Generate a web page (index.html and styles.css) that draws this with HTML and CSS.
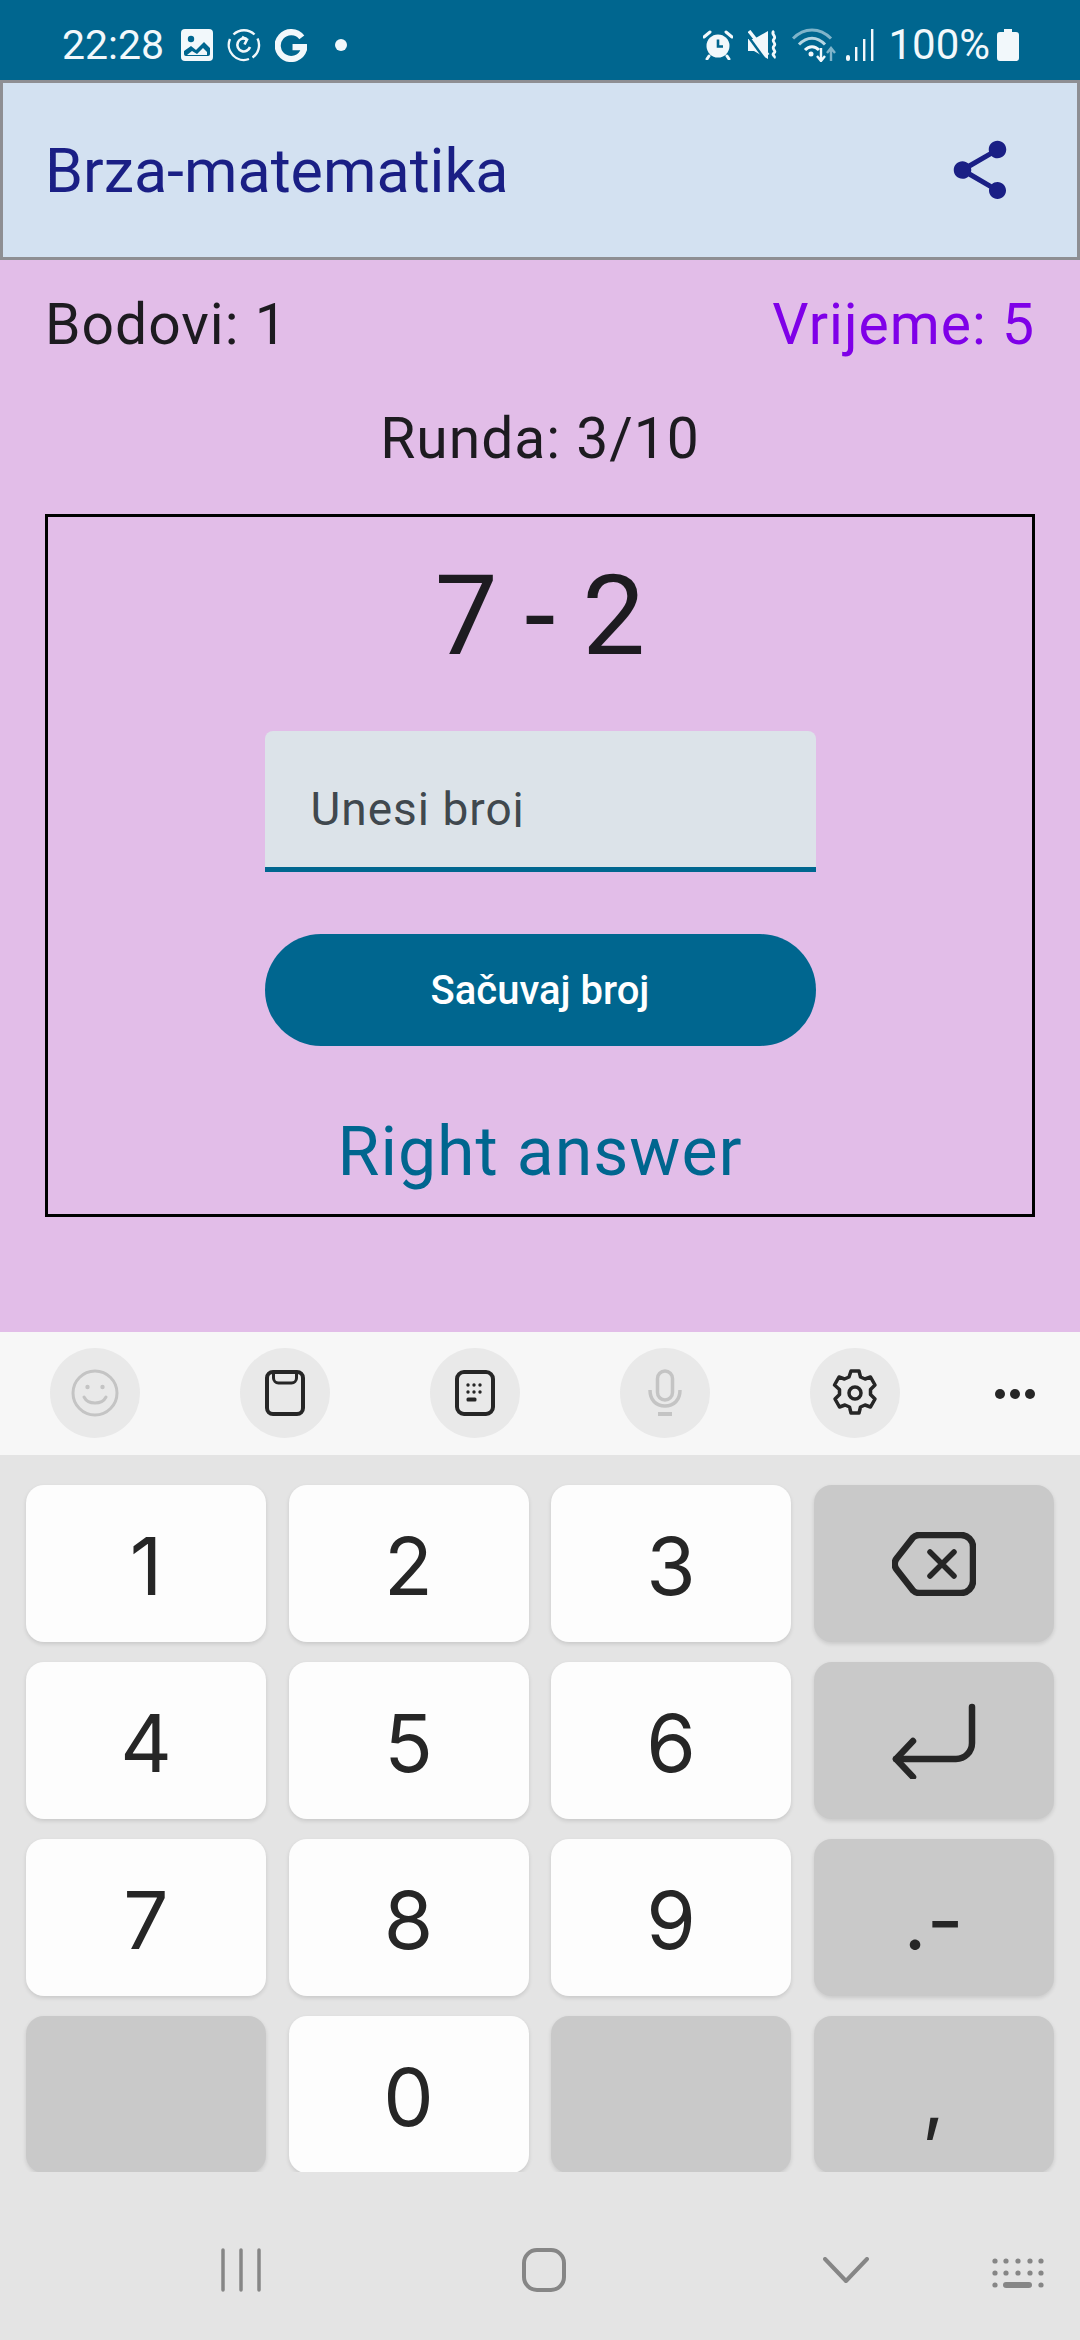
FILE: index.html
```html
<!DOCTYPE html>
<html lang="en">

<head>
    <meta charset="UTF-8">
    <meta name="viewport" content="width=device-width, initial-scale=1.0">
    <title>Brza-matematika</title>
    <link rel="stylesheet" href="styles.css">
</head>

<body>
    <div class="phone">
        <!-- Status bar -->
        <div class="status-bar">
            <div class="status-left">
                <span class="clock">22:28</span>
                <svg class="ic-image" viewBox="0 0 32 32"><rect width="32" height="32" rx="4" fill="#f2f8fb"/><circle cx="10" cy="10" r="3.200" fill="#00668f"/><path d="M3 22l7-5 5 4 8-8 6 6v6a2 2 0 0 1-2 2H5a2 2 0 0 1-2-2z" fill="#00668f"/><path d="M6 26l5-4 5 3 6-6 4 4v3z" fill="#f2f8fb"/></svg>
                <svg class="ic-sync" viewBox="0 0 34 34" fill="none" stroke="#f2f8fb"><path d="M6.500 6.500A15 15 0 0 1 27.500 6.500M30.500 10.500A15 15 0 0 1 25.500 29.500M22 31A15 15 0 0 1 3 11" stroke-width="2.400"/><path d="M23 19a6.500 6.500 0 1 1-3.500-8" stroke-width="2.600"/><path d="M15 9l5 2.500-2.500 5" stroke-width="2.600"/></svg>
                <svg class="ic-g" viewBox="0 0 32 32" fill="none"><path d="M26 8.200A13 13 0 1 0 28 20v-2.500H17" stroke="#f2f8fb" stroke-width="6"/></svg>
                <span class="dot"></span>
            </div>
            <div class="status-right">
                <svg class="ic-alarm" viewBox="0 0 30 30"><circle cx="15" cy="16" r="11.500" fill="#f2f8fb"/><path d="M15 9.500V16.500H20" fill="none" stroke="#00668f" stroke-width="2.600"/><path d="M1 7l6-5M29 7l-6-5M6 26l-2 3M24 26l2 3" stroke="#f2f8fb" stroke-width="3" stroke-linecap="round"/></svg>
                <svg class="ic-mute" viewBox="0 0 30 30"><path d="M0 9h6l14-8v28L6 21H0z" fill="#f2f8fb"/><path d="M-2 3.500L16 28" stroke="#00668f" stroke-width="2.500"/><path d="M1 1l19 24" stroke="#f2f8fb" stroke-width="3.500"/><path d="M26 1c-4 3 3 5 0 8s3 4 0 7 3 5 0 7 2 3 0 5" fill="none" stroke="#f2f8fb" stroke-width="2.800"/></svg>
                <svg class="ic-wifi" viewBox="0 0 44 34" fill="none"><path d="M1 10.500C12 -1 28 -1 39 10.500" stroke="#7fb4ca" stroke-width="3"/><path d="M7 16.500C15 8 25 8 33 16.500" stroke="#b5d5e2" stroke-width="3"/><path d="M13 22C17 17.500 23 17.500 27 22" stroke="#f2f8fb" stroke-width="3"/><circle cx="19" cy="26" r="2.500" fill="#f2f8fb"/><path d="M29 20v12M25 28l4 5 4-5" stroke="#f2f8fb" stroke-width="2.400"/><path d="M39 33V21M35 25l4-5 4 5" stroke="#7fb4ca" stroke-width="2.400"/></svg>
                <svg class="ic-signal" viewBox="0 0 28 32"><rect x="0" y="26" width="4" height="6" rx="2" fill="#f2f8fb"/><rect x="9" y="18" width="2.400" height="14" fill="#f2f8fb"/><rect x="17" y="10" width="2.400" height="22" fill="#f2f8fb"/><rect x="25" y="0" width="2.400" height="32" fill="#f2f8fb"/></svg>
                <span class="battery-text">100%</span>
                <svg class="ic-battery" viewBox="0 0 22 32"><path d="M7 0h8v3h4a3 3 0 0 1 3 3v23a3 3 0 0 1-3 3H3a3 3 0 0 1-3-3V6a3 3 0 0 1 3-3h4z" fill="#f2f8fb"/></svg>
            </div>
        </div>

        <!-- App bar -->
        <div class="app-bar">
            <span class="app-title">Brza-matematika</span>
            <svg class="ic-share" viewBox="0 0 24 24"><path d="M18 16.080c-.76 0-1.440.3-1.960.77L8.910 12.700c.05-.23.09-.46.09-.7s-.04-.47-.09-.7l7.050-4.110c.54.5 1.250.81 2.040.81 1.660 0 3-1.340 3-3s-1.340-3-3-3-3 1.340-3 3c0 .24.04.47.09.7L8.040 9.810C7.500 9.310 6.790 9 6 9c-1.660 0-3 1.340-3 3s1.340 3 3 3c.79 0 1.500-.31 2.040-.81l7.120 4.160c-.05.21-.08.43-.08.65 0 1.610 1.310 2.920 2.920 2.920 1.610 0 2.920-1.310 2.920-2.920s-1.310-2.920-2.920-2.920z"/></svg>
        </div>

        <!-- Game -->
        <div class="game">
            <div class="score-row">
                <span>Bodovi: 1</span>
                <span class="time">Vrijeme: 5</span>
            </div>
            <div class="round">Runda: 3/10</div>
            <div class="task-box">
                <div class="equation">7 - 2</div>
                <div class="field"><span class="field-text">Unesi broj</span></div>
                <div class="save-btn">Sačuvaj broj</div>
                <div class="answer">Right answer</div>
            </div>
        </div>

        <!-- Keyboard toolbar -->
        <div class="kb-tools">
            <div class="tool"><svg viewBox="0 0 48 48" fill="none" stroke="#c4c4c4" stroke-width="3"><circle cx="24" cy="24" r="22"/><circle cx="16.500" cy="18" r="2.200" fill="#c4c4c4" stroke="none"/><circle cx="31.500" cy="18" r="2.200" fill="#c4c4c4" stroke="none"/><path d="M13 28c4 8 18 8 22 0" stroke-linecap="round"/></svg></div>
            <div class="tool"><svg viewBox="0 0 48 48" fill="none" stroke="#262626" stroke-width="4"><rect x="6" y="3" width="36" height="42" rx="6"/><path d="M12.500 3v6a5 5 0 0 0 5 5h13a5 5 0 0 0 5-5V3" stroke-width="3"/></svg></div>
            <div class="tool"><svg viewBox="0 0 48 48" fill="none" stroke="#262626" stroke-width="4"><rect x="6" y="3" width="36" height="42" rx="7"/><g fill="#262626" stroke="none"><circle cx="17" cy="16" r="1.700"/><circle cx="23" cy="16" r="1.700"/><circle cx="29" cy="16" r="1.700"/><circle cx="17" cy="23" r="1.700"/><circle cx="23" cy="23" r="1.700"/><circle cx="29" cy="23" r="1.700"/><rect x="15.500" y="28.500" width="10" height="4" rx="1.500"/></g></svg></div>
            <div class="tool"><svg viewBox="0 0 48 48" fill="none" stroke="#c4c4c4" stroke-width="3.500"><rect x="16.500" y="2" width="15" height="29" rx="7.500"/><path d="M9 21c0 10 6 16 15 16s15-6 15-16"/><path d="M17 45h14" stroke-width="4"/></svg></div>
            <div class="tool"><svg viewBox="0 0 48 48" fill="none" stroke="#262626" stroke-width="3.500" stroke-linejoin="round"><path d="M20 2h8l1.500 6 4.500 2 5.500-2 4.500 8-4.500 4.500v5l4.500 4.500-4.500 8-5.500-2-4.500 2-1.500 6h-8l-1.500-6-4.500-2-5.500 2-4.500-8 4.500-4.500v-5L3.500 16 8 8l5.500 2 4.500-2z"/><circle cx="24" cy="24" r="6"/></svg></div>
            <div class="tool-more"><span></span><span></span><span></span></div>
        </div>

        <!-- Keyboard -->
        <div class="keyboard">
            <div class="key">1</div>
            <div class="key">2</div>
            <div class="key">3</div>
            <div class="key key-gray"><svg class="ic-back" viewBox="0 0 84 64" fill="none" stroke="#262626" stroke-width="6.500" stroke-linecap="round" stroke-linejoin="round"><path d="M27 3h42a12 12 0 0 1 12 12v34a12 12 0 0 1-12 12H27a9 9 0 0 1-6-2.500L5 38a9 9 0 0 1 0-12L21 5.500A9 9 0 0 1 27 3z"/><path d="M38 20l24 24M62 20L38 44" stroke-width="5.500"/></svg></div>
            <div class="key">4</div>
            <div class="key">5</div>
            <div class="key">6</div>
            <div class="key key-gray"><svg class="ic-enter" viewBox="0 0 84 76" fill="none" stroke="#262626" stroke-width="6.500" stroke-linecap="round" stroke-linejoin="round"><path d="M80 4v36a16 16 0 0 1-16 16H4"/><path d="M21 38L4 56l17 18"/></svg></div>
            <div class="key">7</div>
            <div class="key">8</div>
            <div class="key">9</div>
            <div class="key key-gray key-sym">.-</div>
            <div class="key key-gray"></div>
            <div class="key">0</div>
            <div class="key key-gray"></div>
            <div class="key key-gray key-sym">,</div>
        </div>

        <!-- Navigation bar -->
        <div class="nav-bar">
            <svg class="nav-recents" viewBox="0 0 40 44" stroke="#868686" stroke-width="3.500" stroke-linecap="round"><path d="M2 2v40M20 2v40M38 2v40"/></svg>
            <svg class="nav-home" viewBox="0 0 44 44" fill="none" stroke="#868686" stroke-width="4"><rect x="2" y="2" width="40" height="40" rx="13"/></svg>
            <svg class="nav-back" viewBox="0 0 46 26" fill="none" stroke="#868686" stroke-width="4" stroke-linecap="round" stroke-linejoin="round"><path d="M2 2l21 22L44 2"/></svg>
            <svg class="nav-kb" viewBox="0 0 52 30" fill="#868686"><circle cx="3" cy="3" r="2.600"/><circle cx="14" cy="3" r="2.600"/><circle cx="26" cy="3" r="2.600"/><circle cx="38" cy="3" r="2.600"/><circle cx="49" cy="3" r="2.600"/><circle cx="3" cy="15" r="2.600"/><circle cx="14" cy="15" r="2.600"/><circle cx="26" cy="15" r="2.600"/><circle cx="38" cy="15" r="2.600"/><circle cx="49" cy="15" r="2.600"/><circle cx="3" cy="27" r="2.600"/><rect x="11" y="24" width="29" height="6" rx="3"/><circle cx="49" cy="27" r="2.600"/></svg>
        </div>
    </div>
</body>

</html>
```

FILE: styles.css
```css
* {
    box-sizing: border-box;
}

body {
    margin: 0px;
    padding: 0px;
    font-family: Roboto, "Liberation Sans", sans-serif;
}

.phone {
    width: 1080px;
    height: 2340px;
    display: flex;
    flex-direction: column;
    overflow: hidden;
    background: #e2bde8;
}

/* Status bar */
.status-bar {
    height: 80px;
    padding: 0 61px 0 62px;
    background: #00668f;
    display: flex;
    justify-content: space-between;
    align-items: center;
    color: #f2f8fb;
}

.status-left,
.status-right {
    display: flex;
    align-items: center;
    margin-top: 10px;
}

.clock {
    font-size: 41px;
    line-height: 48px;
}

.ic-image {
    width: 32px;
    height: 32px;
    margin-left: 17px;
}

.ic-sync {
    width: 34px;
    height: 34px;
    margin-left: 14px;
}

.ic-g {
    width: 33px;
    height: 33px;
    margin-left: 14px;
}

.dot {
    width: 12px;
    height: 12px;
    margin-left: 27px;
    border-radius: 50%;
    background: #f2f8fb;
}

.ic-alarm {
    width: 30px;
    height: 30px;
}

.ic-mute {
    width: 30px;
    height: 30px;
    margin-left: 15px;
}

.ic-wifi {
    width: 44px;
    height: 34px;
    margin-left: 14px;
}

.ic-signal {
    width: 28px;
    height: 32px;
    margin-left: 10px;
}

.battery-text {
    margin-left: 14px;
    font-size: 42px;
    line-height: 48px;
}

.ic-battery {
    width: 22px;
    height: 32px;
    margin-left: 7px;
}

/* App bar */
.app-bar {
    height: 180px;
    padding: 0 62px 0 42px;
    border: 3px solid #8e8e93;
    background: #d3e1f1;
    display: flex;
    justify-content: space-between;
    align-items: center;
}

.app-title {
    margin-top: 2px;
    font-size: 61px;
    color: #1a1f85;
}

.ic-share {
    width: 70px;
    height: 70px;
    fill: #1a1f85;
}

/* Game */
.game {
    flex: 1;
    padding: 32px 45px 0;
    color: #1d1b20;
}

.score-row {
    display: flex;
    justify-content: space-between;
    font-size: 57px;
    line-height: 66px;
    letter-spacing: 1px;
}

.time {
    color: #7f00e8;
}

.round {
    margin-top: 48px;
    font-size: 57px;
    line-height: 66px;
    letter-spacing: 1px;
    text-align: center;
}

.task-box {
    height: 703px;
    margin-top: 42px;
    padding-top: 32px;
    border: 3px solid #000;
    display: flex;
    flex-direction: column;
    align-items: center;
}

.equation {
    font-size: 112px;
    line-height: 134px;
    word-spacing: -1px;
}

.field {
    width: 551px;
    height: 141px;
    margin-top: 48px;
    padding: 0 46px;
    border-bottom: 5px solid #00668f;
    border-radius: 8px 8px 0 0;
    background: #dce3e9;
}

.field-text {
    display: block;
    height: 45px;
    margin-top: 51px;
    overflow: hidden;
    font-size: 46px;
    line-height: 54px;
    letter-spacing: 1px;
    color: #40484e;
}

.save-btn {
    width: 551px;
    height: 112px;
    margin-top: 62px;
    border-radius: 56px;
    background: #00668f;
    color: #fff;
    font-size: 40px;
    font-weight: 500;
    line-height: 114px;
    text-align: center;
}

.answer {
    margin-top: 66px;
    font-size: 68px;
    line-height: 80px;
    letter-spacing: 1px;
    color: #00668f;
}

/* Keyboard toolbar */
.kb-tools {
    height: 123px;
    padding: 0 0 0 50px;
    background: #f7f7f7;
    display: flex;
    gap: 100px;
    align-items: center;
}

.tool {
    width: 90px;
    height: 90px;
    margin-top: -1px;
    border-radius: 50%;
    background: #e9e9e9;
    display: flex;
    justify-content: center;
    align-items: center;
}

.tool svg {
    width: 48px;
    height: 48px;
}

.tool-more {
    width: 40px;
    margin-left: -5px;
    display: flex;
    justify-content: space-between;
}

.tool-more span {
    width: 10px;
    height: 10px;
    border-radius: 50%;
    background: #262626;
}

/* Keyboard */
.keyboard {
    height: 717px;
    padding: 30px 26px 0;
    background: #e4e4e4;
    display: grid;
    grid-template-columns: repeat(4, 240px);
    grid-auto-rows: 157px;
    column-gap: 22.5px;
    row-gap: 20px;
}

.key {
    padding-top: 4px;
    border-radius: 18px;
    background: #fdfdfd;
    box-shadow: 0 2px 4px rgba(0, 0, 0, 0.12);
    display: flex;
    justify-content: center;
    align-items: center;
    font-family: Inter, Roboto, sans-serif;
    font-size: 80px;
    color: #262626;
}

.key-gray {
    padding-top: 0;
    background: #c9c9c9;
}

.key-gray.key-sym {
    padding-top: 4px;
}

.ic-back {
    width: 84px;
    height: 64px;
}

.ic-enter {
    width: 84px;
    height: 76px;
}

/* Navigation bar */
.nav-bar {
    height: 168px;
    padding-top: 76px;
    background: #e4e4e4;
    display: flex;
    align-items: flex-start;
}

.nav-recents {
    width: 40px;
    height: 44px;
    margin-left: 221px;
}

.nav-home {
    width: 44px;
    height: 44px;
    margin-left: 261px;
}

.nav-back {
    width: 46px;
    height: 26px;
    margin-top: 9px;
    margin-left: 257px;
}

.nav-kb {
    width: 52px;
    height: 30px;
    margin-top: 10px;
    margin-left: 123px;
}
```
